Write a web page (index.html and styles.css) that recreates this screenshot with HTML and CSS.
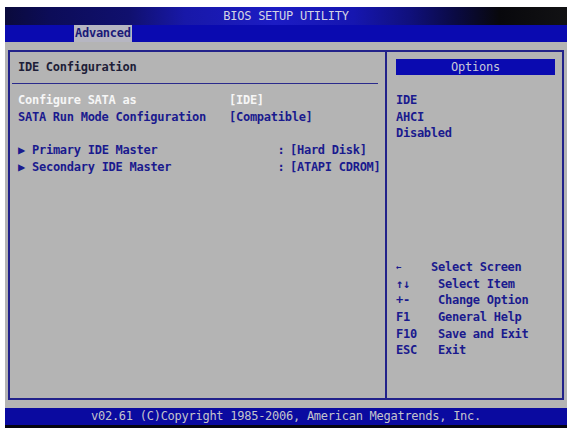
FILE: index.html
```html
<!DOCTYPE html>
<html lang="en">
<head>
  <meta charset="UTF-8" />
  <meta name="viewport" content="width=device-width, initial-scale=1.0" />
  <title>BIOS SETUP UTILITY</title>
  <link rel="stylesheet" href="styles.css">
</head>
<body>
  <div class="screen">
    <div class="titlebar">BIOS SETUP UTILITY</div>
    <div class="menubar">
      <span class="tab">Advanced</span>
    </div>

    <div class="main">
      <div class="panel">
        <div class="left">
          <div class="row heading">IDE Configuration</div>
          <div class="row"><div class="rule"></div></div>
          <div class="row selected">
            <span class="label">Configure SATA as</span><span>[IDE]</span>
          </div>
          <div class="row">
            <span class="label">SATA Run Mode Configuration</span><span>[Compatible]</span>
          </div>
          <div class="row"></div>
          <div class="row">
            <span class="arrow">▶</span><span class="sublabel">Primary IDE Master</span><span class="colon">:</span><span>[Hard Disk]</span>
          </div>
          <div class="row">
            <span class="arrow">▶</span><span class="sublabel">Secondary IDE Master</span><span class="colon">:</span><span>[ATAPI CDROM]</span>
          </div>
        </div>

        <div class="right">
          <div class="row options">Options</div>
          <div class="row"></div>
          <div class="row">IDE</div>
          <div class="row">AHCI</div>
          <div class="row">Disabled</div>

          <div class="help">
            <div class="row"><span class="key short">←</span><span>Select Screen</span></div>
            <div class="row"><span class="key">↑↓</span><span>Select Item</span></div>
            <div class="row"><span class="key">+-</span><span>Change Option</span></div>
            <div class="row"><span class="key">F1</span><span>General Help</span></div>
            <div class="row"><span class="key">F10</span><span>Save and Exit</span></div>
            <div class="row"><span class="key">ESC</span><span>Exit</span></div>
          </div>
        </div>
      </div>
    </div>

    <div class="footer">v02.61 (C)Copyright 1985-2006, American Megatrends, Inc.</div>
  </div>
</body>
</html>
```

FILE: styles.css
```css
body {
  margin: 0;
  background-color: #ffffff;
  font-family: "DejaVu Sans Mono", "Liberation Mono", monospace;
  font-weight: bold;
  font-size: 12px;
  letter-spacing: -0.26px;
}
.screen {
  margin: 7px 0 0 5px;
  width: 562px;
  height: 421px;
  display: flex;
  flex-direction: column;
  background-color: #050510;
}
.titlebar {
  height: 18px;
  line-height: 18px;
  text-align: center;
  color: #d4d4e4;
  font-weight: normal;
  background: linear-gradient(to right, #0a0a3c 0%, #0c0c58 8%, #10106e 22%, #1818a8 32%, #1c1cc4 48%, #1616b0 62%, #10107c 72%, #0a0a44 80%, #08080c 88%, #121214 100%);
}
.menubar {
  height: 17px;
  background-color: #0a0ab0;
  display: flex;
}
.tab {
  margin-left: 69px;
  padding: 0 1px;
  line-height: 17px;
  background-color: #b6b6c2;
  color: #1a1a78;
}
.main {
  height: 366px;
  box-sizing: border-box;
  padding: 8px 3px 0 3px;
  background-color: #b4b4b4;
}
.panel {
  height: 350px;
  box-sizing: border-box;
  border: 2px solid #22228a;
  display: grid;
  grid-template-columns: 377px 1fr;
}
.row {
  height: 16.7px;
  line-height: 16.7px;
  display: flex;
  align-items: center;
  white-space: pre;
  color: #1a1a8e;
}
.left {
  padding: 6.6px 0 0 8px;
  border-right: 2px solid #22228a;
}
.heading {
  color: #1e1e38;
}
.rule {
  margin-left: -6px;
  width: 366px;
  height: 1px;
  background-color: #2a2a8c;
}
.selected {
  color: #f6f6f6;
}
.label {
  width: 211px;
}
.arrow {
  width: 14px;
  font-size: 12px;
}
.sublabel {
  width: 245.5px;
}
.colon {
  width: 12.5px;
}
.right {
  padding: 6.6px 7px 0 9px;
  display: flex;
  flex-direction: column;
}
.options {
  justify-content: center;
  background-color: #0a0ab0;
  color: #c8c8d8;
  font-weight: normal;
}
.help {
  margin-top: 116.9px;
}
.key {
  width: 42px;
}
.key.short {
  width: 35px;
  font-size: 9px;
}
.footer {
  height: 17px;
  line-height: 17px;
  text-align: center;
  color: #c4c4cc;
  font-weight: normal;
  background-color: #0a0aa0;
}
```
